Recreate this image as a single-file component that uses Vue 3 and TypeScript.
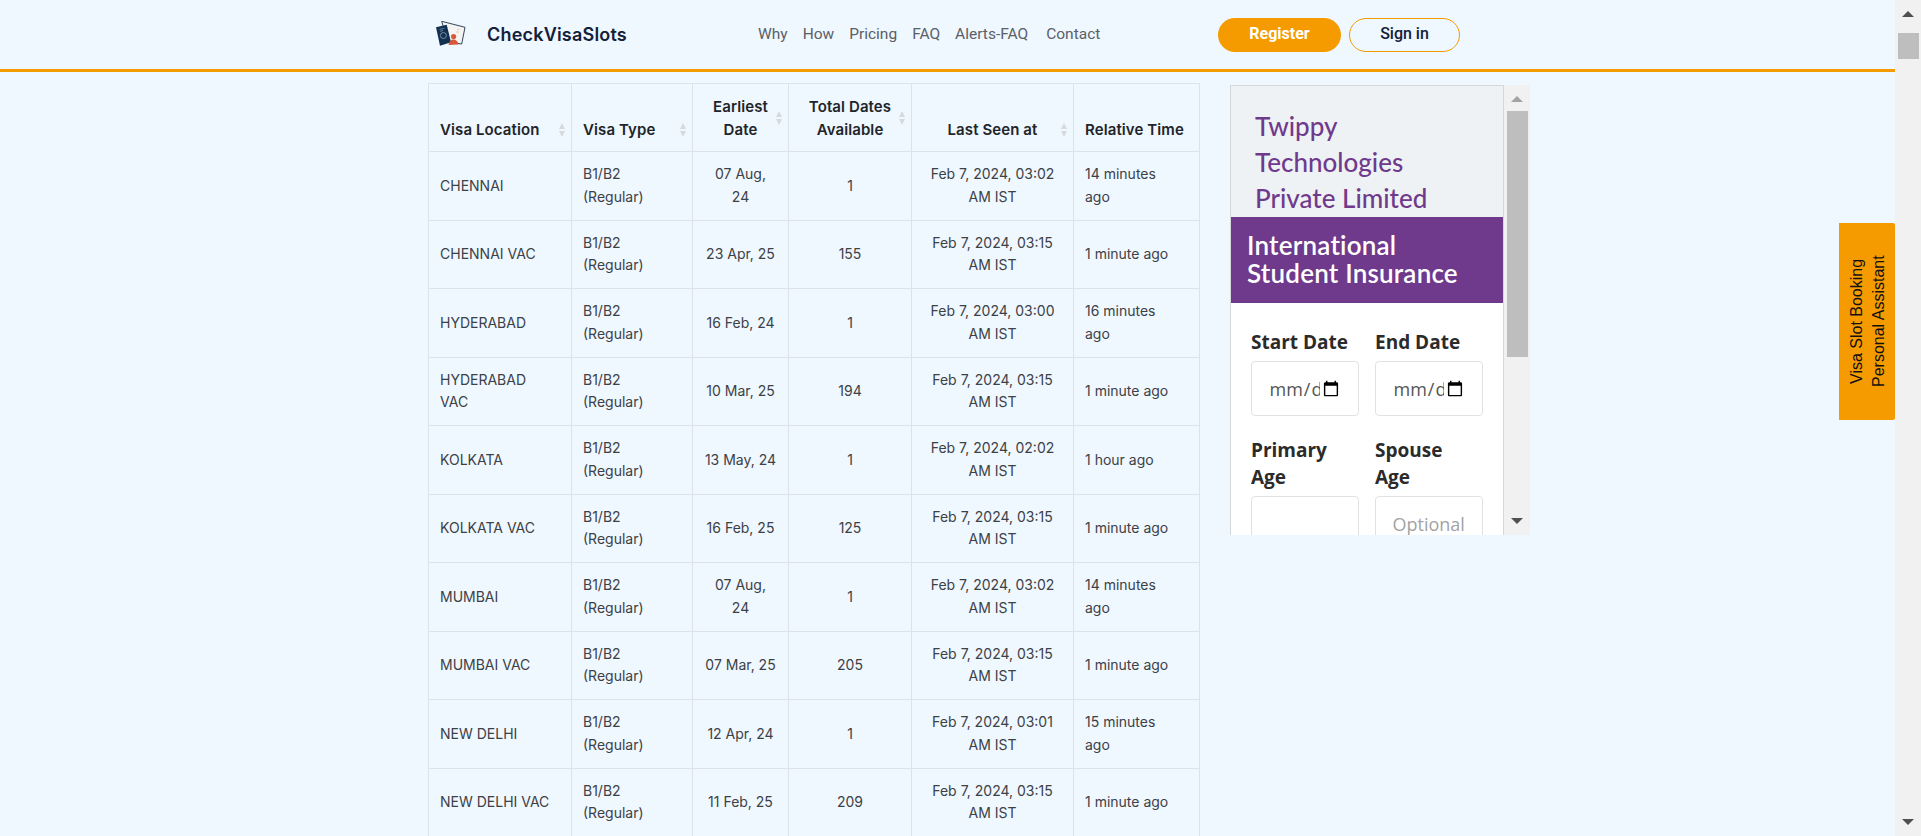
<script setup lang="ts">
interface Row { loc: string; date: string; total: number; seen: string; rel: string }
const nav: string[] = ['Why', 'How', 'Pricing', 'FAQ', 'Alerts-FAQ', 'Contact']
const rows: Row[] = [
  { loc: 'CHENNAI', date: '07 Aug,\n24', total: 1, seen: 'Feb 7, 2024, 03:02\nAM IST', rel: '14 minutes\nago' },
  { loc: 'CHENNAI VAC', date: '23 Apr, 25', total: 155, seen: 'Feb 7, 2024, 03:15\nAM IST', rel: '1 minute ago' },
  { loc: 'HYDERABAD', date: '16 Feb, 24', total: 1, seen: 'Feb 7, 2024, 03:00\nAM IST', rel: '16 minutes\nago' },
  { loc: 'HYDERABAD\nVAC', date: '10 Mar, 25', total: 194, seen: 'Feb 7, 2024, 03:15\nAM IST', rel: '1 minute ago' },
  { loc: 'KOLKATA', date: '13 May, 24', total: 1, seen: 'Feb 7, 2024, 02:02\nAM IST', rel: '1 hour ago' },
  { loc: 'KOLKATA VAC', date: '16 Feb, 25', total: 125, seen: 'Feb 7, 2024, 03:15\nAM IST', rel: '1 minute ago' },
  { loc: 'MUMBAI', date: '07 Aug,\n24', total: 1, seen: 'Feb 7, 2024, 03:02\nAM IST', rel: '14 minutes\nago' },
  { loc: 'MUMBAI VAC', date: '07 Mar, 25', total: 205, seen: 'Feb 7, 2024, 03:15\nAM IST', rel: '1 minute ago' },
  { loc: 'NEW DELHI', date: '12 Apr, 24', total: 1, seen: 'Feb 7, 2024, 03:01\nAM IST', rel: '15 minutes\nago' },
  { loc: 'NEW DELHI VAC', date: '11 Feb, 25', total: 209, seen: 'Feb 7, 2024, 03:15\nAM IST', rel: '1 minute ago' },
]
</script>

<template>
  <div class="page">
    <div class="main">
      <header class="topbar">
        <svg class="logo" width="30" height="26" viewBox="0 0 30 26" aria-hidden="true">
          <polygon points="5.7,0.3 29,6.3 25.7,23 12,21" fill="#f4f4f2" stroke="#33475b" stroke-width="1" />
          <path d="M21 8c1 1 2 1 3 0M20 11h3" stroke="#ecc4b8" stroke-width="1" fill="none" />
          <polygon points="0,6.3 10.7,3.7 15,21.3 4,24.7" fill="#12304f" />
          <circle cx="7.4" cy="14.5" r="3" fill="none" stroke="#8aa3bb" stroke-width="0.8" />
          <path d="M3.5 8.5l5-1.3M4 10.3l3-.8" stroke="#8aa3bb" stroke-width="0.7" fill="none" />
          <circle cx="17.6" cy="15.6" r="2.6" fill="#d9583c" />
          <path d="M12.500 24c.3-3.500 2.500-5.500 5-5.500s4.500 2 5 5z" fill="#d9583c" />
        </svg>
        <span class="brand">CheckVisaSlots</span>
        <nav class="nav">
          <a v-for="n in nav" :key="n">{{ n }}</a>
        </nav>
        <button class="btn register">Register</button>
        <button class="btn signin">Sign in</button>
      </header>

      <div class="content">
        <table class="slots">
          <colgroup>
            <col class="c1" /><col class="c2" /><col class="c3" /><col class="c4" /><col class="c5" /><col class="c6" />
          </colgroup>
          <thead>
            <tr>
              <th class="left"><div class="thin">Visa Location<i class="sort" /></div></th>
              <th class="left"><div class="thin">Visa Type<i class="sort" /></div></th>
              <th><div class="thin">Earliest<br />Date<i class="sort" /></div></th>
              <th><div class="thin">Total Dates<br />Available<i class="sort" /></div></th>
              <th><div class="thin">Last Seen at<i class="sort" /></div></th>
              <th class="left">Relative Time</th>
            </tr>
          </thead>
          <tbody>
            <tr v-for="r in rows" :key="r.loc">
              <td>{{ r.loc }}</td>
              <td>B1/B2<br />(Regular)</td>
              <td class="mid">{{ r.date }}</td>
              <td class="mid">{{ r.total }}</td>
              <td class="mid">{{ r.seen }}</td>
              <td>{{ r.rel }}</td>
            </tr>
          </tbody>
        </table>

        <aside class="ad">
          <div class="ad-body">
            <div class="ad-brand">Twippy Technologies Private Limited</div>
            <div class="ad-title">International Student Insurance</div>
            <form class="ad-form">
              <label class="field"><span>Start Date</span><input type="date" /></label>
              <label class="field"><span>End Date</span><input type="date" /></label>
              <label class="field"><span>Primary Age</span><input type="text" /></label>
              <label class="field"><span>Spouse<br />Age</span><input type="text" placeholder="Optional" /></label>
            </form>
          </div>
          <div class="bar ad-bar">
            <i class="arrow up light" />
            <div class="thumb ad-thumb" />
            <i class="arrow down" />
          </div>
        </aside>
      </div>

      <a class="assistant">Visa Slot Booking<br />Personal Assistant</a>
    </div>
    <div class="bar page-bar">
      <i class="arrow up" />
      <div class="thumb page-thumb" />
      <i class="arrow down" />
    </div>
  </div>
</template>

<style>
html, body { margin: 0; overflow: hidden; }
</style>

<style scoped>
.page {
  display: flex;
  width: 1921px;
  height: 836px;
  overflow: hidden;
  background: #eff7ff;
  font-family: Inter, "Liberation Sans", sans-serif;
  color: #212529;
}
.main { position: relative; flex: 1; min-width: 0; overflow: hidden; }
.topbar {
  display: flex;
  align-items: center;
  height: 69px;
  padding-left: 436px;
  border-bottom: 3px solid #f59b00;
}
.logo { flex: none; margin-top: -1px; }
.brand {
  margin-left: 21px;
  width: 271px;
  font: 600 18px Inter, sans-serif;
  letter-spacing: .2px;
  color: #12203a;
}
.nav {
  display: flex;
  gap: 15px;
  width: 460px;
  margin-top: -2px;
  font: 400 15.5px Roboto, sans-serif;
  color: #5a6066;
}
.nav a:last-child { margin-left: 3px; }
.btn {
  height: 34px;
  border-radius: 17px;
  font: 500 16px Roboto, sans-serif;
  box-sizing: border-box;
  padding: 0 0 2px;
}
.register { width: 123px; background: #f59b00; color: #fff; border: 0; font-weight: 700; }
.signin { width: 111px; margin-left: 8px; background: transparent; color: #12203a; border: 1px solid #f59b00; }
.content { display: flex; align-items: flex-start; padding: 11px 0 0 428px; }
.slots {
  flex: none;
  width: 771px;
  table-layout: fixed;
  border-collapse: collapse;
  font-size: 14px;
  line-height: 22.4px;
}
.c1 { width: 143px; } .c2 { width: 121px; } .c3 { width: 96px; }
.c4 { width: 123px; } .c5 { width: 162px; } .c6 { width: 126px; }
th, td { border: 1px solid #dce3ea; }
th {
  padding: 11px 11px 10px;
  vertical-align: bottom;
  text-align: center;
  font-size: 15px;
  font-weight: 600;
  letter-spacing: .1px;
  line-height: 23px;
  color: #212529;
}
th.left { text-align: left; }
.thin { position: relative; }
.sort {
  position: absolute;
  right: -5px;
  top: 50%;
  width: 0;
  height: 0;
  margin-top: -7px;
  border: 3.5px solid transparent;
  border-top: 0;
  border-bottom: 6px solid #d6dadd;
}
.sort::after {
  content: "";
  position: absolute;
  left: -3.5px;
  top: 8px;
  border: 3.5px solid transparent;
  border-bottom: 0;
  border-top: 6px solid #d6dadd;
}
td { padding: 11.35px 11px; color: #3c4146; vertical-align: middle; white-space: pre-line; }
td.mid { text-align: center; }
.ad {
  flex: none;
  display: flex;
  margin: 2px 0 0 30px;
  height: 450px;
  overflow: hidden;
}
.ad-body {
  box-sizing: border-box;
  width: 274px;
  border: 1px solid #d5d8da;
  border-bottom: 0;
  background: #fff;
  font-family: "Open Sans", sans-serif;
}
.ad-brand {
  background: #eff2f5;
  padding: 22px 45px 0 24px;
  font: 500 26px/36px Lato, sans-serif;
  color: #6f3a8c;
  height: 109px;
}
.ad-title {
  background: #6f3a8c;
  color: #fff;
  font: 600 26px/28px Lato, sans-serif;
  letter-spacing: .2px;
  padding: 14px 20px 16px 16px;
}
.ad-form {
  display: grid;
  grid-template-columns: 108px 108px;
  column-gap: 16px;
  row-gap: 21px;
  padding: 26px 0 0 20px;
}
.field { display: flex; flex-direction: column; justify-content: flex-end; }
.field span { font: 700 19px/27px "Open Sans", sans-serif; color: #2b2b2b; margin-bottom: 5px; }
.field input {
  box-sizing: border-box;
  width: 108px;
  height: 55px;
  border: 1px solid #dfe2e5;
  border-radius: 4px;
  padding: 0 16.5px;
  font: 400 18px "Open Sans", sans-serif;
  color: #555;
  background: #fff;
  outline: none;
}
.field input::placeholder { color: #a3a3a3; }
.bar {
  position: relative;
  flex: none;
  display: flex;
  flex-direction: column;
  align-items: center;
  background: #f1f1f1;
}
.thumb { position: absolute; left: 3px; right: 2px; background: #bebebe; }
.page-bar { width: 26px; height: 836px; }
.page-thumb { top: 33px; height: 26px; }
.ad-bar { width: 26px; height: 450px; }
.ad-thumb { top: 26px; height: 246px; }
.arrow { position: absolute; left: 50%; margin-left: -6px; width: 0; height: 0; border: 6px solid transparent; }
.arrow.up { top: 11px; border-top: 0; border-bottom: 6px solid #505050; }
.arrow.up.light { border-bottom-color: #a3a3a3; }
.arrow.down { bottom: 11px; border-bottom: 0; border-top: 6px solid #505050; }
.assistant {
  position: absolute;
  right: 0;
  top: 223px;
  box-sizing: border-box;
  width: 56px;
  height: 197px;
  padding-right: 2px;
  display: flex;
  align-items: center;
  justify-content: center;
  border-radius: 2px 0 0 2px;
  background: #f59b00;
  color: #111;
  font: 400 16px/22px "Liberation Sans", sans-serif;
  text-align: center;
  writing-mode: vertical-rl;
  transform: rotate(180deg);
}
</style>
